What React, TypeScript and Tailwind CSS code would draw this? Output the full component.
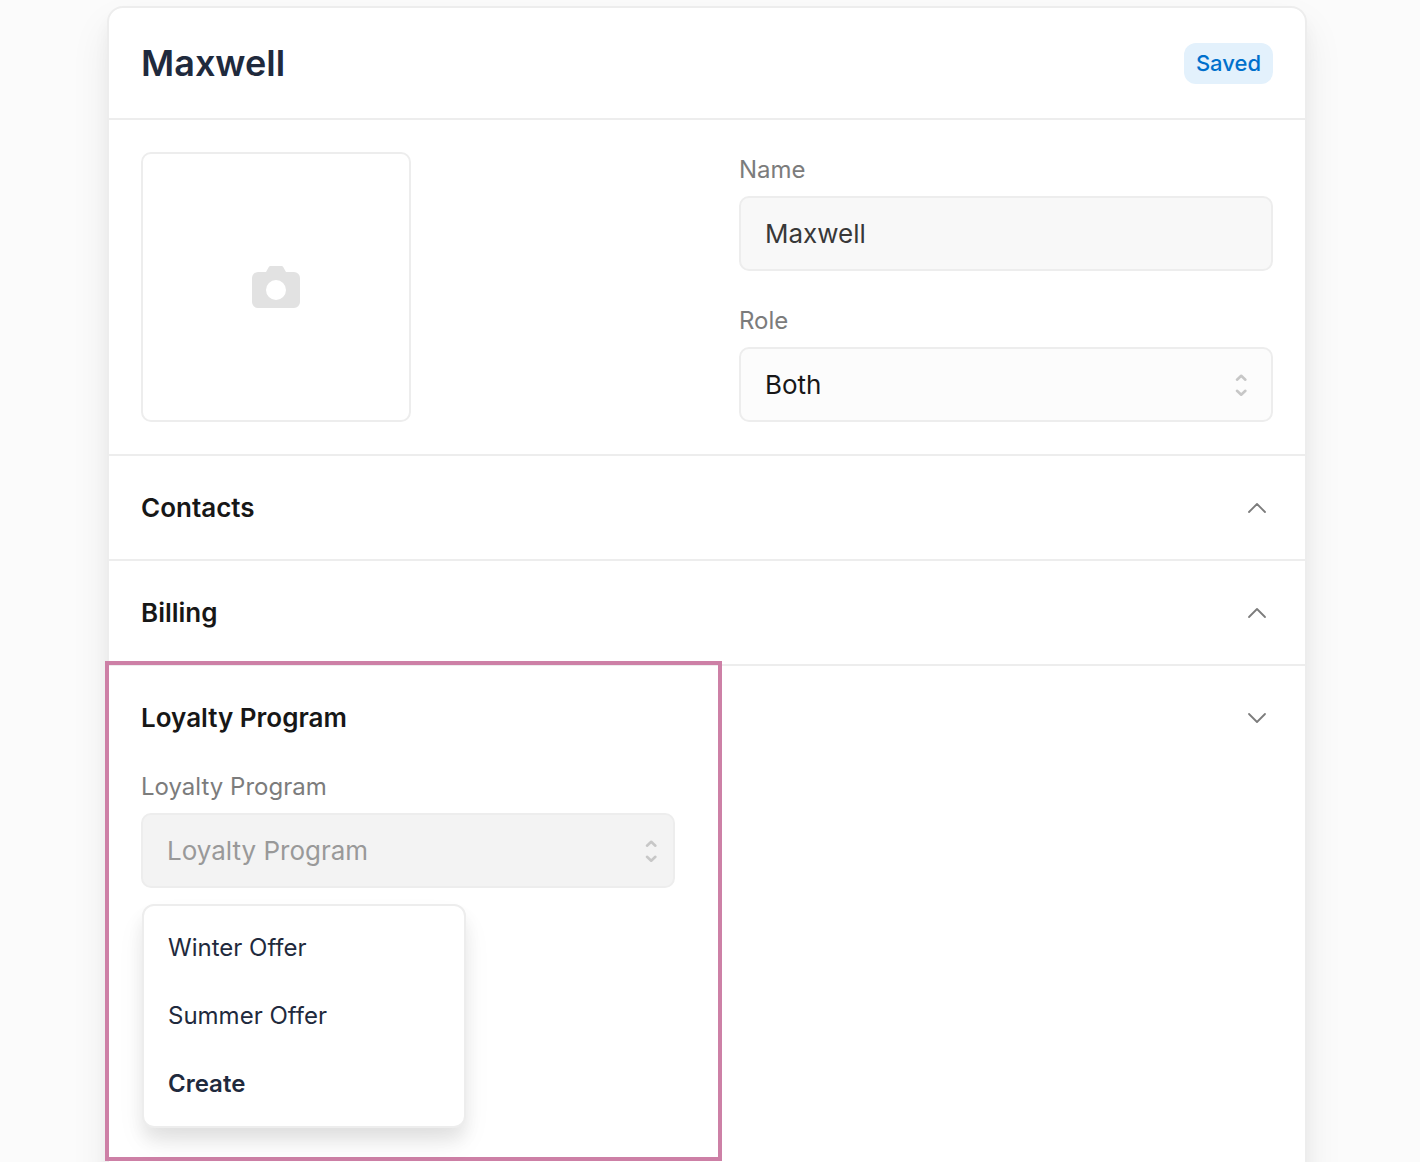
import { useState } from "react";

function Sorter({ className }: { className: string }) {
  return (
    <svg className={`pointer-events-none absolute top-1/2 h-8 w-8 -translate-y-1/2 text-[#c7c7c7] ${className}`} viewBox="0 0 32 32" fill="none" stroke="currentColor" strokeWidth="2.6" strokeLinecap="round" strokeLinejoin="round" aria-hidden="true">
      <path d="M12 10.700 16.200 6.800l4.200 3.900M12 21.800l4.200 3.900 4.200-3.900" />
    </svg>
  );
}

function Chevron({ open }: { open: boolean }) {
  return (
    <svg className="h-8 w-8 text-[#7c7c7c]" viewBox="0 0 32 32" fill="none" stroke="currentColor" strokeWidth="1.8" strokeLinecap="round" strokeLinejoin="round" aria-hidden="true">
      <path d={open ? "M8 12l8 8 8-8" : "M8 20l8-8 8 8"} />
    </svg>
  );
}

function SectionHeader({ title, open }: { title: string; open: boolean }) {
  return (
    <h2>
      <button type="button" aria-expanded={open} className="flex h-[103px] w-full items-center justify-between px-8 text-left text-[26px] leading-8 font-semibold text-[#171717]">
        {title}
        <Chevron open={open} />
      </button>
    </h2>
  );
}

export default function App() {
  const [name, setName] = useState("Maxwell");
  return (
    <div className="min-h-screen overflow-hidden bg-[#fbfbfb] pt-1.5 pr-[113px] pl-[107px] font-['Inter',sans-serif]">
      <main className="min-h-[1180px] rounded-2xl border-2 border-[#ededed] bg-white shadow-[0_12px_16px_rgba(0,0,0,0.04),0_20px_40px_rgba(0,0,0,0.07)]">
        <header className="flex h-28 items-center justify-between border-b-2 border-[#ededed] px-8">
          <h1 className="text-4xl font-semibold text-[#1f2a3d]">Maxwell</h1>
          <span className="rounded-xl bg-[#e3f1fc] px-3 py-1 text-[22px] leading-[33px] font-medium text-[#0070cc]">Saved</span>
        </header>
        <section className="grid grid-cols-2 gap-16 border-b-2 border-[#ededed] p-8">
          <button type="button" aria-label="Add photo" className="flex size-[270px] items-center justify-center rounded-[10px] border-2 border-[#ededed]">
            <svg className="h-12 w-12" viewBox="0 0 48 48" aria-hidden="true">
              <path fill="#e2e2e2" fillRule="evenodd" d="M18.500 3h11a2 2 0 0 1 1.700 1L34 9h8a6 6 0 0 1 6 6v24a6 6 0 0 1-6 6H6a6 6 0 0 1-6-6V15a6 6 0 0 1 6-6h8l2.800-5a2 2 0 0 1 1.700-1zM24 17a10 10 0 1 0 0 20 10 10 0 0 0 0-20z" />
            </svg>
          </button>
          <div className="flex flex-col justify-between">
            <div>
              <label htmlFor="name" className="mb-2 block text-2xl leading-9 text-[#7c7c7c]">Name</label>
              <input id="name" value={name} onChange={(e) => setName(e.target.value)} className="block h-[75px] w-full rounded-[10px] border-2 border-[#ededed] bg-[#f8f8f8] px-6 text-[26px] text-[#383838]" />
            </div>
            <div>
              <label htmlFor="role" className="mb-2 block text-2xl leading-9 text-[#7c7c7c]">Role</label>
              <div className="relative">
                <select id="role" className="block h-[75px] w-full appearance-none rounded-[10px] border-2 border-[#ededed] bg-[#fcfcfc] px-6 text-[26px] text-[#171717]">
                  <option>Both</option>
                </select>
                <Sorter className="right-4" />
              </div>
            </div>
          </div>
        </section>
        <div className="border-b-2 border-[#ededed]"><SectionHeader title="Contacts" open={false} /></div>
        <div className="border-b-2 border-[#ededed]"><SectionHeader title="Billing" open={false} /></div>
        <section className="relative">
          <div className="pointer-events-none absolute -top-[5px] -left-1 h-[500px] w-[617px] border-4 border-[#cd80a6]" />
          <SectionHeader title="Loyalty Program" open />
          <div className="grid grid-cols-2 gap-16 px-8">
            <div>
              <label htmlFor="loyalty" className="mb-2 block text-2xl leading-9 text-[#7c7c7c]">Loyalty Program</label>
              <div className="relative">
                <input id="loyalty" role="combobox" aria-expanded="true" aria-controls="offers" placeholder="Loyalty Program" className="block h-[75px] w-full rounded-[10px] border-2 border-[#ededed] bg-[#f3f3f3] px-6 text-[26px] placeholder:text-[#999999]" />
                <Sorter className="right-2" />
                <div id="offers" className="absolute top-[91px] left-px w-[324px] rounded-xl border-2 border-[#ededed] bg-white p-2 text-2xl text-[#1f2a3d] shadow-[0_12px_16px_rgba(0,0,0,0.07),0_16px_32px_-4px_rgba(0,0,0,0.07)]">
                  <button type="button" className="block h-[68px] w-full px-4 text-left">Winter Offer</button>
                  <button type="button" className="block h-[68px] w-full px-4 text-left">Summer Offer</button>
                  <button type="button" className="block h-[68px] w-full px-4 text-left font-semibold">Create</button>
                </div>
              </div>
            </div>
          </div>
        </section>
      </main>
    </div>
  );
}
